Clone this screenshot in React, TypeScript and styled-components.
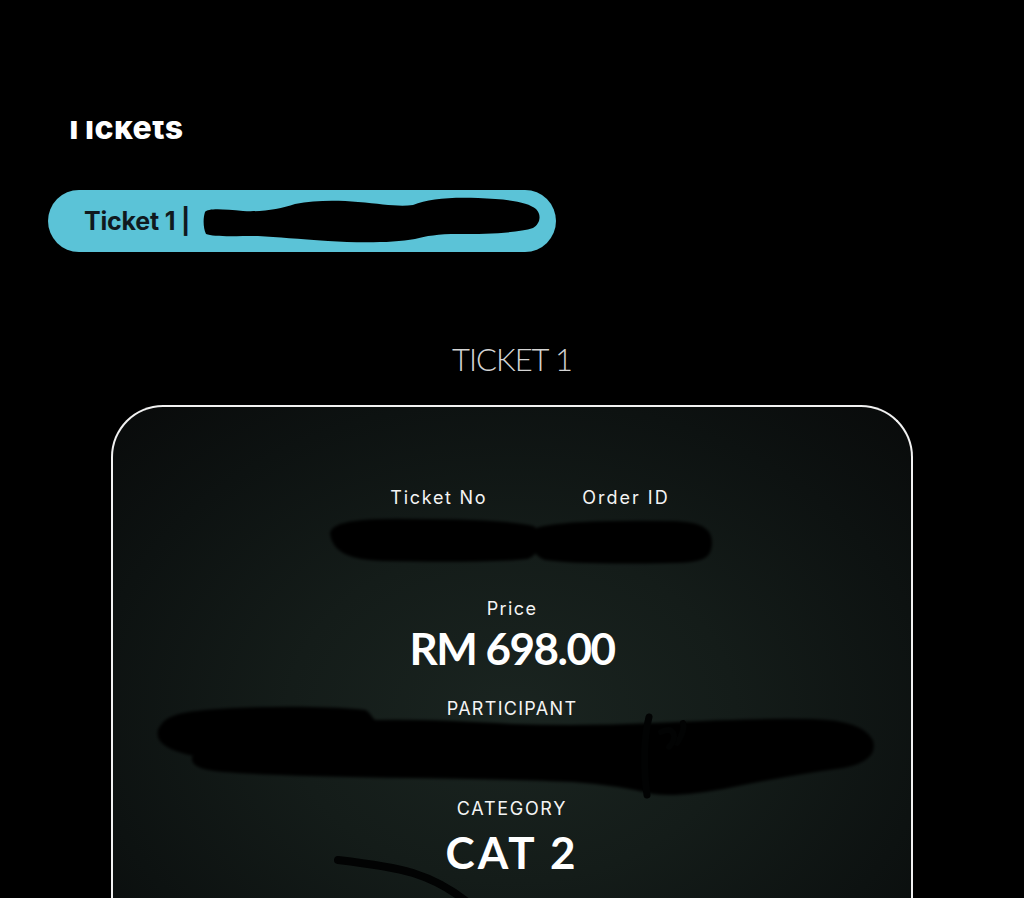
import React from "react";
import styled, { createGlobalStyle } from "styled-components";

const Global = createGlobalStyle`
  html, body { margin: 0; padding: 0; background: #000; }
  body { font-family: "Inter", "Liberation Sans", sans-serif; color: #fff; overflow: hidden; }
`;

const Page = styled.div`
  width: 1024px;
  height: 898px;
  background: #000;
  overflow: hidden;
  padding-top: 121px;
  box-sizing: border-box;
`;

const HeadingWindow = styled.div`
  margin-left: 63px;
  height: 19px;
  overflow: hidden;
  display: flex;
  align-items: flex-end;
`;

const Heading = styled.h1`
  margin: 0 0 -4px 0;
  font-size: 32px;
  line-height: 32px;
  font-weight: 800;
  letter-spacing: 0.4px;
  color: #fff;
`;

const Pill = styled.div`
  position: relative;
  margin: 50px 0 0 48px;
  width: 508px;
  height: 62px;
  border-radius: 31px;
  background: #5bc3d7;
  display: flex;
  align-items: center;
  padding-left: 36px;
  box-sizing: border-box;
`;

const PillText = styled.span`
  font-size: 25px;
  font-weight: 700;
  color: #10191e;
  letter-spacing: -0.2px;
`;

const Redaction = styled.svg`
  position: absolute;
  left: 0;
  top: 0;
  overflow: visible;
  pointer-events: none;
`;

const SectionTitle = styled.div`
  margin-top: 87px;
  text-align: center;
  font-family: "Lato", "Liberation Sans", sans-serif;
  font-weight: 300;
  font-size: 31px;
  line-height: 40px;
  letter-spacing: -1px;
  color: #d4d4d4;
`;

const Card = styled.div`
  position: relative;
  margin: 26px auto 0;
  width: 802px;
  height: 560px;
  box-sizing: border-box;
  border: 2px solid #f2f2f2;
  border-bottom: none;
  border-radius: 52px 52px 0 0;
  background: radial-gradient(
    ellipse 70% 75% at 50% 55%,
    #1a2420 0%,
    #141c19 40%,
    #0d1211 75%,
    #090b0b 100%
  );
  display: flex;
  flex-direction: column;
  align-items: center;
  padding-top: 79px;
`;

const IdRow = styled.div`
  display: flex;
  gap: 95px;
  padding-left: 36px;
`;

const Label = styled.div<{ $mt?: number; $ls?: number }>`
  margin-top: ${(p) => p.$mt ?? 0}px;
  font-size: 18px;
  line-height: 24px;
  letter-spacing: ${(p) => p.$ls ?? 1.7}px;
  font-weight: 400;
  color: #f4f4f4;
`;

const Big = styled.div<{ $mt?: number; $ls?: number }>`
  margin-top: ${(p) => p.$mt ?? 0}px;
  font-family: "Lato", "Inter", sans-serif;
  font-size: 44px;
  line-height: 48px;
  font-weight: 700;
  letter-spacing: ${(p) => p.$ls ?? 0}px;
  color: #fff;
`;

export default function App() {
  return (
    <>
      <Global />
      <Page>
        <HeadingWindow>
          <Heading>Tickets</Heading>
        </HeadingWindow>
        <Pill>
          <PillText>Ticket 1 |</PillText>
          <Redaction width="508" height="62">
            <path
              d="M157 22 C160 18 175 19 195 21 C215 22 232 19 247 14 C267 10 290 10 310 12 C335 14 350 17 365 15 C380 9 400 7 430 8 C460 9 480 12 488 19 C494 25 492 34 485 38 C470 43 440 44 410 44 C390 44 378 46 367 49 C345 53 310 53 280 51 C250 49 230 47 210 46 C185 46 165 47 158 44 C155 38 155 28 157 22 Z"
              fill="#000"
            />
          </Redaction>
        </Pill>
        <SectionTitle>TICKET 1</SectionTitle>
        <Card>
          <IdRow>
            <Label>Ticket No</Label>
            <Label $ls={2}>Order ID</Label>
          </IdRow>
          <Label $mt={87} $ls={1.4}>Price</Label>
          <Big $mt={3} $ls={-1.5}>RM 698.00</Big>
          <Label $mt={25} $ls={1.3}>PARTICIPANT</Label>
          <Label $mt={76}>CATEGORY</Label>
          <Big $mt={7} $ls={3}>CAT 2</Big>
          <Redaction width="802" height="560">
            <defs>
              <filter id="soft" x="-5%" y="-20%" width="110%" height="140%">
                <feGaussianBlur stdDeviation="1.4" />
              </filter>
            </defs>
            <g filter="url(#soft)" fill="#020303" stroke="#020303" strokeWidth="4" strokeLinejoin="round">
              <path d="M219 126 C221 116 250 113 300 114 C350 114 400 116 420 121 C428 132 425 146 414 150 C380 154 320 153 270 152 C238 151 221 144 219 126 Z" />
              <path d="M420 124 C440 116 500 115 560 116 C590 117 598 124 597 138 C596 150 588 154 560 154 C510 155 460 155 432 151 C420 146 418 134 420 124 Z" />
              <path d="M49 320 C55 308 80 305 120 303 C160 301 220 301 252 305 C258 309 257 313 262 315 C300 314 350 316 400 319 C450 321 500 320 540 318 C600 315 660 313 700 314 C735 315 752 322 758 334 C762 346 752 355 730 359 C700 363 660 370 620 378 C590 384 560 388 540 385 C520 380 500 376 460 373 C420 371 370 370 300 369 C230 368 160 367 110 363 C85 361 78 356 82 347 C65 344 50 338 47 330 C46 326 47 322 49 320 Z" />
            </g>
            <g stroke="#020303" fill="none" strokeLinecap="round">
              <path d="M536 310 C531 330 530 360 534 388" strokeWidth="7" />
              <path d="M570 316 C572 322 568 330 564 336" strokeWidth="6" />
              <path d="M548 325 C560 318 566 330 556 340" strokeWidth="6" />
              <path d="M225 453 C250 456 280 460 300 466 C322 473 342 484 360 500" strokeWidth="8" />
            </g>
          </Redaction>
        </Card>
      </Page>
    </>
  );
}
